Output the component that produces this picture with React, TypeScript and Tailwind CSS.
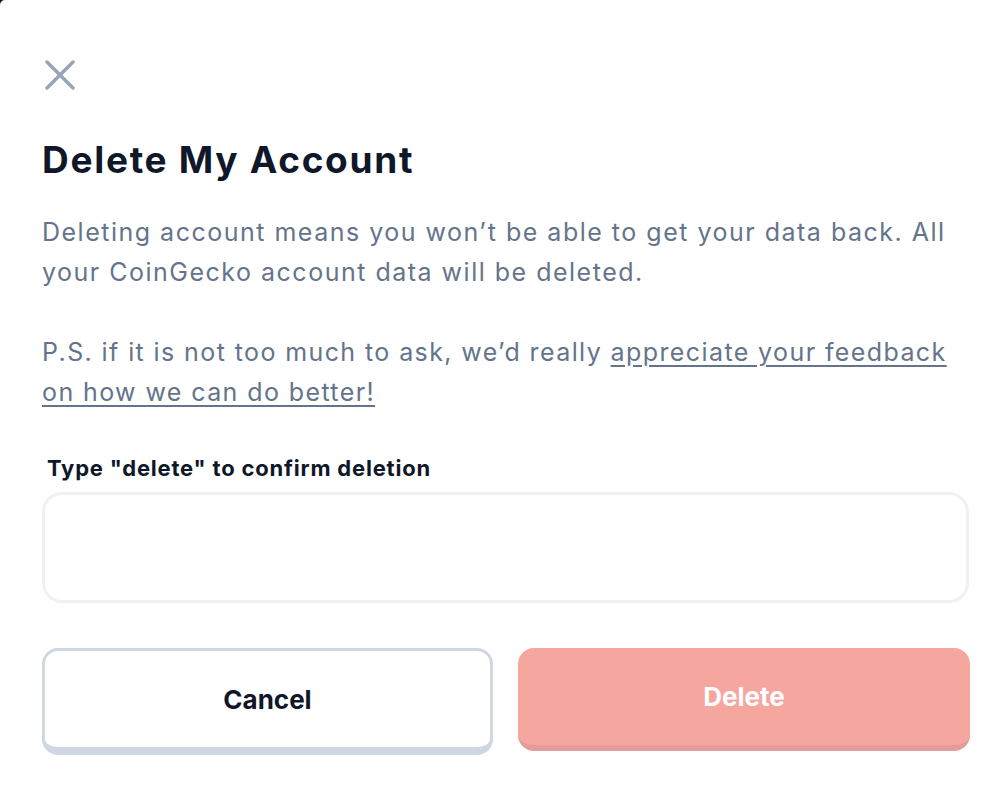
const CloseIcon = () => (
  <svg width="30" height="30" viewBox="0 0 30 30" fill="none" stroke="currentColor" strokeWidth="3.4" strokeLinecap="round">
    <path d="M2 2L28 28M28 2L2 28" />
  </svg>
)

const DeleteAccountModal = () => {
  return (
    <div className="min-h-[794px] bg-[#0d1421]">
      <div className="min-h-[794px] rounded-tl-[5px] bg-white pt-[60px] pr-[38px] pb-10 pl-[42px] font-['Inter',sans-serif]">
        <button className="ml-[3px] block text-[#97a3b6]" aria-label="Close">
          <CloseIcon />
        </button>
        <h1 className="mt-[50px] text-[37px] leading-[40px] font-bold tracking-[1.7px] text-[#0f1729]">
          Delete My Account
        </h1>
        <p className="mt-8 pr-[4px] text-[25px] leading-[40px] tracking-[1.5px] text-[#64748b]">
          Deleting account means you won’t be able to get your data back. All your CoinGecko account data will be
          deleted.
        </p>
        <p className="mt-10 pr-[4px] text-[25px] leading-[40px] tracking-[1.4px] text-[#64748b]">
          P.S. if it is not too much to ask, we’d really{' '}
          <a href="#" className="underline underline-offset-4">
            appreciate your feedback on how we can do better!
          </a>
        </p>
        <label className="mt-[42px] block pl-[5px] text-[22px] leading-[28px] font-bold tracking-[0.8px] text-[#0f1729]">
          Type "delete" to confirm deletion
        </label>
        <input
          type="text"
          className="mt-[10px] block h-[111px] w-[927px] rounded-[20px] border-[3px] border-[#f0f1f4] bg-white outline-none"
        />
        <div className="mt-[45px] flex gap-[25px]">
          <button className="h-[107px] w-[451px] rounded-[16px] border-[3px] border-b-[8px] border-[#cfd7e2] bg-white text-[26px] font-bold text-[#0f1729]">
            Cancel
          </button>
          <button className="h-[103px] w-[452px] rounded-[16px] border-b-[6px] border-[#e39b9c] bg-[#f4a69f] text-[26px] font-bold text-white">
            Delete
          </button>
        </div>
      </div>
    </div>
  )
}

export default function App() {
  return <DeleteAccountModal />
}
